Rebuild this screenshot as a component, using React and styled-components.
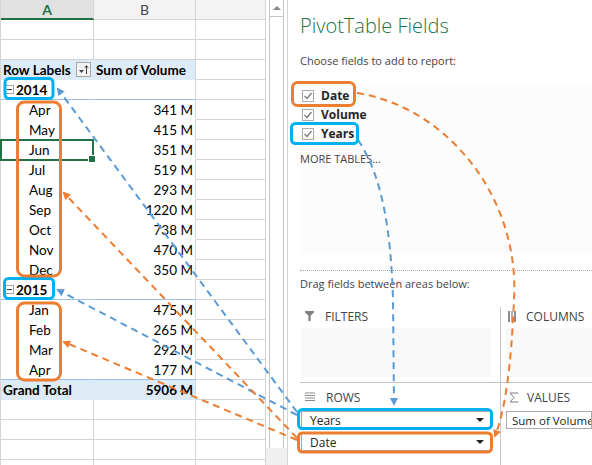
import React from 'react';
import styled, { createGlobalStyle } from 'styled-components';

const GlobalStyle = createGlobalStyle`
  html, body {
    margin: 0;
    padding: 0;
    background: #fff;
  }
  body {
    overflow: hidden;
  }
`;

const BLUE_LINE = '#9bc2e6';
const GRID = '#d4d4d4';
const lineColor = (line) =>
  line === 'blue' ? BLUE_LINE : line === 'none' ? 'transparent' : GRID;

const Page = styled.div`
  position: relative;
  width: 592px;
  height: 465px;
  overflow: hidden;
  display: flex;
  background: #fff;
`;

/* ---------- spreadsheet ---------- */

const Sheet = styled.div`
  flex: none;
  width: 266px;
  box-sizing: border-box;
  border-left: 1px solid ${GRID};
  font-family: Lato, 'Liberation Sans', sans-serif;
  font-size: 13.5px;
  color: #000;
`;

const Row = styled.div`
  display: flex;
  height: 20px;
`;

const HeadCell = styled.div`
  box-sizing: border-box;
  flex: none;
  width: ${(p) => p.$w}px;
  height: 20px;
  display: flex;
  align-items: center;
  justify-content: center;
  background: ${(p) => (p.$active ? '#e1e1e1' : '#f3f3f3')};
  border-right: 1px solid ${GRID};
  border-bottom: ${(p) => (p.$active ? '2px solid #217346' : `1px solid ${GRID}`)};
  color: ${(p) => (p.$active ? '#217346' : '#444')};
  font-size: 14px;
  font-weight: ${(p) => (p.$active ? 700 : 400)};
`;

const Cell = styled.div`
  position: relative;
  box-sizing: border-box;
  flex: none;
  width: ${(p) => p.$w}px;
  height: 20px;
  display: flex;
  align-items: center;
  justify-content: ${(p) => (p.$right ? 'flex-end' : 'flex-start')};
  padding: ${(p) => (p.$right ? '0 2px 0 0' : `0 2px 0 ${p.$indent ?? 2}px`)};
  background: ${(p) => (p.$fill ? '#ddebf7' : '#fff')};
  border-right: 1px solid ${(p) => (p.$open ? 'transparent' : GRID)};
  border-bottom: 1px solid ${(p) => lineColor(p.$line)};
  font-weight: ${(p) => (p.$bold ? 700 : 400)};
  white-space: nowrap;
`;

const FilterBtn = styled.span`
  margin-left: auto;
  box-sizing: border-box;
  width: 15px;
  height: 15px;
  border: 1px solid #a6a6a6;
  background: #f2f2f2;
  display: flex;
  align-items: center;
  justify-content: center;
`;

const ExpandBox = styled.span`
  box-sizing: border-box;
  width: 9px;
  height: 9px;
  margin-right: 2px;
  border: 1px solid #a6a6a6;
  background: #fff;
  display: flex;
  align-items: center;
  justify-content: center;
  &::before {
    content: '';
    width: 5px;
    height: 1px;
    background: #333;
  }
`;

const Selection = styled.span`
  position: absolute;
  left: -1px;
  top: -1px;
  width: 94px;
  height: 22px;
  box-sizing: border-box;
  border: 2px solid #217346;
  z-index: 1;
  &::after {
    content: '';
    position: absolute;
    right: -4px;
    bottom: -4px;
    width: 6px;
    height: 6px;
    background: #217346;
    border: 1px solid #fff;
  }
`;

const Scroll = styled.div`
  flex: none;
  width: 21px;
  display: flex;
  flex-direction: column;
  padding-left: 3px;
  box-sizing: border-box;
`;

const Track = styled.div`
  flex: 1;
  width: 15px;
  box-sizing: border-box;
  border-left: 1px solid #c6c6c6;
  border-right: 1px solid #c6c6c6;
  display: flex;
  flex-direction: column;
`;

const ArrowBtn = styled.div`
  height: 16px;
  border-bottom: 1px solid #c6c6c6;
  display: flex;
  align-items: center;
  justify-content: center;
  &::before {
    content: '';
    border-left: 4px solid transparent;
    border-right: 4px solid transparent;
    border-bottom: 4px solid #868686;
  }
`;

const Corner = styled.div`
  height: 17px;
  margin-left: -3px;
  background: #f0f0f0;
`;

/* ---------- pivot field panel ---------- */

const Panel = styled.div`
  flex: 1;
  min-width: 0;
  border-left: 1px solid ${GRID};
  padding-left: 12px;
  display: flex;
  flex-direction: column;
  font-family: 'Open Sans', 'Noto Sans', sans-serif;
  color: #444;
`;

const Title = styled.h1`
  margin: 12px 0 0;
  font-size: 20px;
  line-height: 27px;
  font-weight: 300;
  color: #217346;
  white-space: nowrap;
`;

const Hint = styled.div`
  margin-top: ${(p) => p.$top}px;
  font-size: 11px;
  line-height: 16px;
  white-space: nowrap;
`;

const FieldList = styled.div`
  margin-top: 17px;
  height: 169px;
  background: #fcfcfc;
  display: flex;
  flex-direction: column;
`;

const Field = styled.label`
  display: flex;
  align-items: center;
  gap: 7px;
  height: 19px;
  padding-left: 2px;
  font-size: 12px;
  font-weight: 700;
  color: #262626;
`;

const Check = styled.span`
  box-sizing: border-box;
  width: 12px;
  height: 12px;
  border: 1px solid #ababab;
  background: #fff;
  display: flex;
  align-items: center;
  justify-content: center;
`;

const MoreTables = styled.div`
  margin-top: 8px;
  font-size: 11px;
  line-height: 16px;
  text-transform: uppercase;
`;

const Dotted = styled.div`
  margin-top: 16px;
  border-top: 1px dotted #a8a8a8;
`;

const Areas = styled.div`
  margin-top: 15px;
  display: grid;
  grid-template-columns: 201px 1fr;
`;

const Area = styled.div`
  box-sizing: border-box;
  padding: 0 ${(p) => (p.$left ? '9px 0 1px' : '0 0 5px')};
  padding-top: ${(p) => (p.$top ? 0 : 5)}px;
  border-right: ${(p) => (p.$left ? '1px solid #c6c6c6' : 'none')};
  border-bottom: ${(p) => (p.$top ? '1px solid #c6c6c6' : 'none')};
  height: ${(p) => (p.$top ? 76 : 82)}px;
  display: flex;
  flex-direction: column;
  min-width: 0;
`;

const AreaHead = styled.div`
  height: 18px;
  display: flex;
  align-items: center;
  gap: ${(p) => p.$gap}px;
  padding-left: ${(p) => p.$pad}px;
  font-size: 12px;
  text-transform: uppercase;
  color: #444;
`;

const DropZone = styled.div`
  margin-top: 3px;
  height: 49px;
  background: #f9f9f9;
`;

const Item = styled.div`
  box-sizing: border-box;
  height: 18px;
  margin-top: ${(p) => p.$top}px;
  border: 1px solid #ababab;
  background: #fff;
  display: flex;
  align-items: center;
  justify-content: space-between;
  padding: 0 6px 0 ${(p) => (p.$wide ? 5 : 8)}px;
  font-size: ${(p) => (p.$wide ? 11.5 : 12)}px;
  color: #262626;
  white-space: nowrap;
  overflow: hidden;
  &::after {
    content: ${(p) => (p.$wide ? 'none' : "''")};
    border-left: 4px solid transparent;
    border-right: 4px solid transparent;
    border-top: 4px solid #222;
  }
`;

const Overlay = styled.svg`
  position: absolute;
  left: 0;
  top: 0;
  pointer-events: none;
  z-index: 5;
`;

/* ---------- data ---------- */

const y2014 = [
  ['Apr', '341 M'],
  ['May', '415 M'],
  ['Jun', '351 M'],
  ['Jul', '519 M'],
  ['Aug', '293 M'],
  ['Sep', '1220 M'],
  ['Oct', '738 M'],
  ['Nov', '470 M'],
  ['Dec', '350 M'],
];
const y2015 = [
  ['Jan', '475 M'],
  ['Feb', '265 M'],
  ['Mar', '292 M'],
  ['Apr', '177 M'],
];

const Blank = () => (
  <Row>
    <Cell $w={93} />
    <Cell $w={102} />
    <Cell $w={70} />
  </Row>
);

const Month = ({ name, value, line, selected }) => (
  <Row>
    <Cell $w={93} $open $line={line || 'none'} $indent={28}>
      {name}
      {selected && <Selection />}
    </Cell>
    <Cell $w={102} $right $line={line || 'none'}>
      {value}
    </Cell>
    <Cell $w={70} />
  </Row>
);

const Year = ({ year }) => (
  <Row>
    <Cell $w={93} $open $bold $line="blue" $indent={4}>
      <ExpandBox />
      {year}
    </Cell>
    <Cell $w={102} $line="blue" />
    <Cell $w={70} />
  </Row>
);

const Tick = () => (
  <svg width="10" height="10" viewBox="0 0 10 10">
    <polyline points="1.5,5 4,7.5 8.5,2" fill="none" stroke="#7a7a7a" strokeWidth="1.3" />
  </svg>
);

const Funnel = () => (
  <svg width="9" height="10" viewBox="0 0 9 10">
    <path d="M0 0H9V1.5L5.6 4.5V10H3.4V4.5L0 1.5Z" fill="#7f7f7f" />
  </svg>
);

const ColumnsIcon = () => (
  <svg width="10" height="11" viewBox="0 0 10 11">
    <rect x="0" y="0" width="2" height="11" fill="#8c8c8c" />
    <rect x="3" y="0" width="2" height="11" fill="#b0b0b0" />
    <rect x="6" y="0" width="2" height="11" fill="#8c8c8c" />
  </svg>
);

const RowsIcon = () => (
  <svg width="10" height="10" viewBox="0 0 10 10">
    {[0.5, 3, 5.5, 8].map((y) => (
      <line key={y} x1="0" x2="10" y1={y + 0.5} y2={y + 0.5} stroke="#8c8c8c" strokeWidth="1" />
    ))}
  </svg>
);

const Sigma = () => (
  <svg width="10" height="11" viewBox="0 0 10 11">
    <path d="M9 1.5V1H1L5 5.5L1 10H9V9.5" fill="none" stroke="#7f7f7f" strokeWidth="1" />
  </svg>
);

const SortIcon = () => (
  <svg width="11" height="11" viewBox="0 0 11 11">
    <path d="M1 6H6L3.5 9Z" fill="#444" />
    <path d="M8.5 10V2M6.8 3.8L8.5 1.5L10.2 3.8" fill="none" stroke="#444" strokeWidth="1" />
  </svg>
);

function Annotations() {
  const blue = '#5b9bd5';
  const orange = '#ed7d31';
  const dash = '7 5';
  return (
    <Overlay width="592" height="465" viewBox="0 0 592 465">
      <defs>
        <marker id="ab" markerUnits="userSpaceOnUse" markerWidth="10" markerHeight="10" refX="6" refY="4" orient="auto">
          <path d="M0 0L8 4L0 8Z" fill={blue} />
        </marker>
        <marker id="ao" markerUnits="userSpaceOnUse" markerWidth="10" markerHeight="10" refX="6" refY="4" orient="auto">
          <path d="M0 0L8 4L0 8Z" fill={orange} />
        </marker>
      </defs>

      <g fill="none" strokeWidth="2" strokeDasharray={dash}>
        <path d="M297 412L58 89" stroke={blue} markerEnd="url(#ab)" />
        <path d="M297 415L58 290" stroke={blue} markerEnd="url(#ab)" />
        <path d="M358 140C382 175 391 230 393 300L394 404" stroke={blue} markerEnd="url(#ab)" />
        <path d="M297 438L64 193" stroke={orange} markerEnd="url(#ao)" />
        <path d="M297 440L64 342" stroke={orange} markerEnd="url(#ao)" />
        <path d="M357 93C450 108 520 200 514 300C511 370 505 410 495 436" stroke={orange} markerEnd="url(#ao)" />
      </g>

      <g fill="none" strokeWidth="3">
        <rect x="5" y="78.5" width="48" height="20" rx="4" stroke="#00b0f0" />
        <rect x="4.5" y="278.5" width="49" height="20" rx="4" stroke="#00b0f0" />
        <rect x="291.5" y="123.5" width="66" height="20" rx="4" stroke="#00b0f0" />
        <rect x="298.5" y="409.5" width="193" height="19" rx="4" stroke="#00b0f0" />
        <rect x="17.5" y="102" width="43" height="174" rx="7" stroke={orange} />
        <rect x="17.5" y="303" width="43" height="77" rx="7" stroke={orange} />
        <rect x="292.5" y="82.5" width="62" height="23" rx="5" stroke={orange} />
        <rect x="298.5" y="433" width="193" height="19" rx="4" stroke={orange} />
      </g>
    </Overlay>
  );
}

export default function App() {
  return (
    <>
      <GlobalStyle />
      <Page>
        <Sheet>
          <Row>
            <HeadCell $w={93} $active>A</HeadCell>
            <HeadCell $w={102}>B</HeadCell>
            <HeadCell $w={70} />
          </Row>
          <Blank />
          <Blank />
          <Row>
            <Cell $w={93} $open $fill $bold $line="none">
              Row Labels
              <FilterBtn>
                <SortIcon />
              </FilterBtn>
            </Cell>
            <Cell $w={102} $fill $bold $line="none">
              Sum of Volume
            </Cell>
            <Cell $w={70} />
          </Row>
          <Year year="2014" />
          {y2014.map(([m, v]) => (
            <Month key={m} name={m} value={v} selected={m === 'Jun'} />
          ))}
          <Year year="2015" />
          {y2015.map(([m, v], i) => (
            <Month key={m} name={m} value={v} line={i === y2015.length - 1 ? 'blue' : undefined} />
          ))}
          <Row>
            <Cell $w={93} $open $fill $bold $line="none">
              Grand Total
            </Cell>
            <Cell $w={102} $fill $bold $right $line="none">
              5906 M
            </Cell>
            <Cell $w={70} />
          </Row>
          <Blank />
          <Blank />
          <Blank />
          <Blank />
        </Sheet>

        <Scroll>
          <Track>
            <ArrowBtn />
          </Track>
          <Corner />
        </Scroll>

        <Panel>
          <Title>PivotTable Fields</Title>
          <Hint $top={14}>Choose fields to add to report:</Hint>
          <FieldList>
            {['Date', 'Volume', 'Years'].map((f) => (
              <Field key={f}>
                <Check>
                  <Tick />
                </Check>
                {f}
              </Field>
            ))}
            <MoreTables>More Tables...</MoreTables>
          </FieldList>
          <Dotted />
          <Hint $top={5}>Drag fields between areas below:</Hint>
          <Areas>
            <Area $left $top>
              <AreaHead $pad={4} $gap={11}>
                <Funnel />
                Filters
              </AreaHead>
              <DropZone />
            </Area>
            <Area $top>
              <AreaHead $pad={2} $gap={8}>
                <ColumnsIcon />
                Columns
              </AreaHead>
              <DropZone />
            </Area>
            <Area $left>
              <AreaHead $pad={4} $gap={11}>
                <RowsIcon />
                Rows
              </AreaHead>
              <Item $top={5}>Years</Item>
              <Item $top={4}>Date</Item>
            </Area>
            <Area>
              <AreaHead $pad={3} $gap={8}>
                <Sigma />
                Values
              </AreaHead>
              <Item $top={5} $wide>
                Sum of Volume
              </Item>
            </Area>
          </Areas>
        </Panel>

        <Annotations />
      </Page>
    </>
  );
}
